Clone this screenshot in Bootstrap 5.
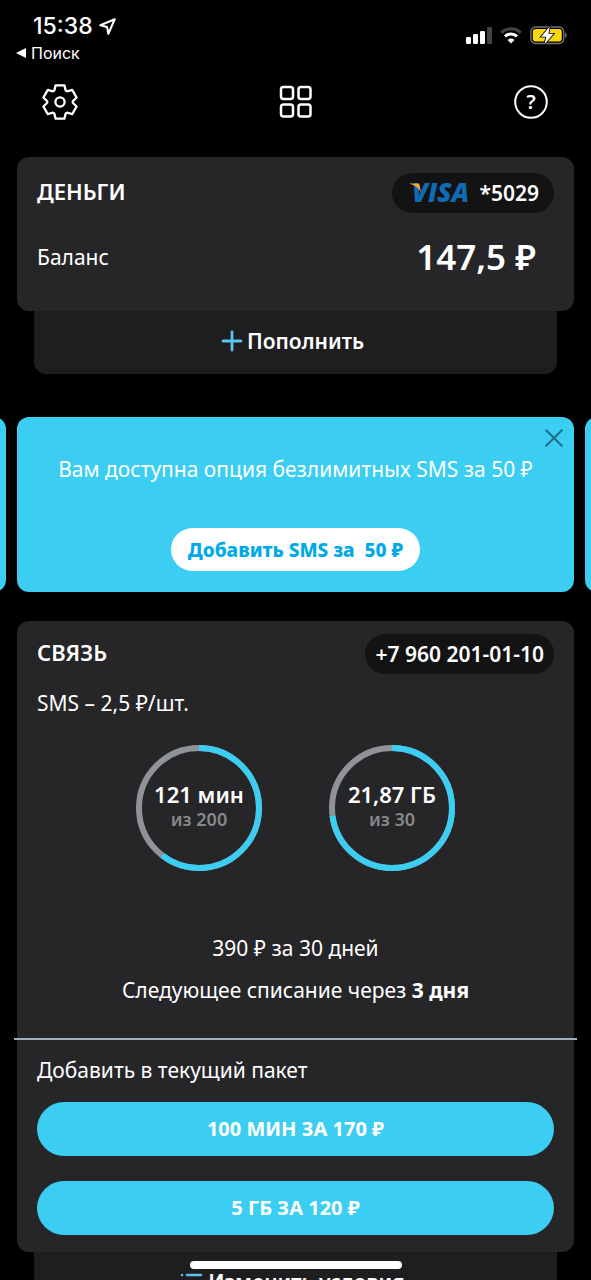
<!DOCTYPE html>
<html lang="ru">
<head>
<meta charset="utf-8">
<meta name="viewport" content="width=device-width, initial-scale=1">
<title>Деньги и связь</title>
<link href="https://cdn.jsdelivr.net/npm/bootstrap@5.3.0/dist/css/bootstrap.min.css" rel="stylesheet">
<style>
  :root { --sky: #3ccdf2; --panel: #262628; --panel-low: #1e1e20; --pill: #131313; }
  body { background: #000; color: #fff; font-family: "Noto Sans", "Open Sans", sans-serif; font-size: 21px; line-height: 30px; }
  svg { display: block; flex: none; }
  .status-bar { font-family: Inter, sans-serif; padding: 12px 24px 0 16px; height: 68px; }
  .clock { font-size: 23px; line-height: 28px; font-weight: 500; padding-left: 17px; gap: 6px; }
  .back-link { font-size: 16px; line-height: 20px; margin-top: 3px; }
  .status-icons { padding-top: 14px; }
  .app-nav { height: 68px; padding: 0 42px; }
  .icon-btn { background: none; border: 0; padding: 0; color: #fff; }
  .gutter { padding: 0 17px; }
  .money { margin-top: 21px; }
  .panel { background: var(--panel); border-radius: 12px; padding: 16px 20px 29px; }
  .panel-tall { padding: 13px 20px 17px; }
  .balance-row { margin-top: 19px; }
  .under-btn { display: flex; align-items: center; justify-content: center; gap: 4px; margin: 0 17px; height: 63px; padding: 0 6px 4px 0; background: var(--panel-low); border: 0; border-radius: 0 0 12px 12px; color: #fff; font-weight: 600; }
  .under-wrap { display: grid; }
  .section-title { font-size: 22px; line-height: 30px; font-weight: 600; margin: 0; padding-bottom: 4px; }
  .pill { background: var(--pill); border: 0; border-radius: 20px; height: 40px; color: #fff; font-weight: 600; padding: 0 10px; }
  .pill-card { padding: 0 15px; }
  .amount { font-size: 35px; line-height: 50px; font-weight: 600; padding-right: 18px; }
  .promo-row { gap: 11px; margin-top: 43px; margin-bottom: 29px; }
  .promo { flex: none; width: calc(100% - 34px); background: var(--sky); border-radius: 12px; padding: 37px 20px 21px; }
  .promo-btn { height: 43px; border: 0; border-radius: 22px; background: #fff; color: #00a9e8; font-size: 19px; font-weight: 800; padding: 0 17px; margin-top: 44px; }
  .promo-close { position: absolute; top: 12px; right: 11px; color: #1f6e86; }
  .sms-rate { margin-top: 14px; }
  .dials { gap: 67px; margin: 27px 0 62px; }
  .dial { display: grid; width: 126px; height: 126px; }
  .dial > * { grid-area: 1 / 1; }
  .dial-text { align-self: center; padding-bottom: 4px; }
  .dial-value { font-size: 22px; line-height: 26px; font-weight: 600; }
  .dial-total { font-size: 18px; line-height: 24px; font-weight: 600; color: #87888c; }
  .next-charge { margin-top: 12px; }
  .divider { margin: 33px -23px 15px; border: 0; border-top: 2px solid #a5adbb; opacity: 1; }
  .packs { margin-top: 17px; row-gap: 25px; }
  .pack-btn { height: 54px; border: 0; border-radius: 27px; background: var(--sky); color: #fff; font-size: 20px; font-weight: 700; }
  .home-bar { position: fixed; bottom: 11px; left: 50%; margin-left: -106px; width: 212px; height: 8px; border-radius: 4px; background: #fff; }
</style>
</head>
<body>
<div class="vh-100 overflow-hidden">
  <header>
    <div class="status-bar d-flex justify-content-between">
      <div>
        <div class="clock d-flex align-items-center">15:38
          <svg width="17" height="17" viewBox="0 0 16 16" fill="none" stroke="#fff" stroke-width="1.9" stroke-linejoin="round"><path d="M14.800 1.200 1.200 6.800l6.400 1.600 1.200 6.400z"/></svg>
        </div>
        <a href="#" class="back-link d-flex align-items-center text-white text-decoration-none gap-1">
          <svg width="11" height="10" viewBox="0 0 11 10" fill="#fff"><path d="M0 5 10 0v10z"/></svg>Поиск</a>
      </div>
      <div class="status-icons d-flex align-items-start gap-2">
        <svg width="26" height="18" viewBox="0 0 26 18" fill="#fff"><rect y="11" width="5" height="7" rx="1.200"/><rect x="7" y="8" width="5" height="10" rx="1.200"/><rect x="14" y="5" width="5" height="13" rx="1.200"/><rect x="21" y="1" width="5" height="17" rx="1.200" fill="#434345"/></svg>
        <svg width="22" height="18" viewBox="0 0 22 18" fill="none" stroke-width="3"><path d="M1.200 6.800a14 14 0 0 1 19.600 0" stroke="#434345"/><path d="M5 10.400a8.600 8.600 0 0 1 12 0" stroke="#fff"/><path d="M11 17.600 7.600 14a4.800 4.800 0 0 1 6.800 0z" fill="#fff"/></svg>
        <svg width="37" height="19" viewBox="0 0 37 19"><rect x=".8" y="1" width="33" height="16.500" rx="5" fill="none" stroke="#77777a" stroke-width="1.300"/><rect x="2.800" y="3" width="29" height="12.500" rx="3" fill="#fbd50e"/><path d="M35.200 6.500c2 .8 2 4.700 0 5.500z" fill="#77777a"/><path d="M19.800.6 11 10.800h5.200l-1.800 7.600 9.200-10.600h-5.200z" fill="#fff" stroke="#000" stroke-width="1.600" paint-order="stroke"/></svg>
      </div>
    </div>
    <nav class="app-nav d-flex justify-content-between align-items-center">
      <button class="icon-btn" aria-label="Настройки">
        <svg width="36" height="36" viewBox="-18 -18 36 36" fill="none" stroke="currentColor" stroke-width="2.300" stroke-linejoin="round"><path d="M-5.700-11.500-4.400-16.600H4.400L5.700-11.500 7.100-10.700 12.200-12.100 16.600-4.500 12.800-.8V.8L16.600 4.500 12.200 12.100 7.100 10.700 5.700 11.500 4.400 16.600H-4.400L-5.700 11.500-7.100 10.700-12.200 12.100-16.600 4.500-12.800.8V-.8L-16.600-4.500-12.200-12.100-7.100-10.700z"/><circle r="4.600"/></svg>
      </button>
      <button class="icon-btn" aria-label="Разделы">
        <svg width="34" height="34" viewBox="0 0 34 34" fill="none" stroke="currentColor" stroke-width="2.500"><rect x="2" y="2" width="12" height="12" rx="2.500"/><rect x="19.500" y="2" width="12" height="12" rx="2.500"/><rect x="2" y="19.500" width="12" height="12" rx="2.500"/><rect x="19.500" y="19.500" width="12" height="12" rx="2.500"/></svg>
      </button>
      <button class="icon-btn" aria-label="Помощь">
        <svg width="36" height="36" viewBox="0 0 36 36"><circle cx="18" cy="18" r="15.800" fill="none" stroke="#fff" stroke-width="2"/><text x="18" y="25" text-anchor="middle" fill="#fff" font-size="20" font-weight="600">?</text></svg>
      </button>
    </nav>
  </header>

  <main>
    <section class="gutter money">
      <div class="panel">
        <div class="d-flex justify-content-between align-items-center">
          <h2 class="section-title">ДЕНЬГИ</h2>
          <button class="pill pill-card d-flex align-items-center gap-2">
            <svg width="64" height="38" viewBox="0 0 64 38"><text x="5" y="28" font-family="Open Sans" font-size="26" font-weight="800" font-style="italic" fill="#0f6cb4">VISA</text><path d="M2 9.500h8c1.600 0 2.400.6 2.700 2l1.500 7.500C12.500 14.500 8 11 2 9.500z" fill="#f3a73a"/></svg>
            *5029
          </button>
        </div>
        <div class="balance-row d-flex justify-content-between align-items-center">
          <span>Баланс</span><span class="amount">147,5 ₽</span>
        </div>
      </div>
      <div class="under-wrap">
        <button class="under-btn">
          <svg width="22" height="22" viewBox="0 0 22 22" stroke="#5bc3ee" stroke-width="2.800" stroke-linecap="round"><path d="M11 2v18M2 11h18"/></svg>
          Пополнить
        </button>
      </div>
    </section>

    <section class="promo-row d-flex justify-content-center">
      <div class="promo"></div>
      <div class="promo position-relative text-center">
        <button class="icon-btn promo-close" aria-label="Закрыть"><svg width="18" height="18" viewBox="0 0 18 18" stroke="currentColor" stroke-width="2" stroke-linecap="round"><path d="M1.200 1.200 16.800 16.800M16.800 1.200 1.200 16.800"/></svg></button>
        <div>Вам доступна опция безлимитных SMS за 50 ₽</div>
        <button class="promo-btn">Добавить SMS за&nbsp; 50 ₽</button>
      </div>
      <div class="promo"></div>
    </section>

    <section class="gutter">
      <div class="panel panel-tall">
        <div class="d-flex justify-content-between align-items-center">
          <h2 class="section-title">СВЯЗЬ</h2>
          <button class="pill">+7 960 201-01-10</button>
        </div>
        <div class="sms-rate">SMS – 2,5 ₽/шт.</div>
        <div class="dials d-flex justify-content-center">
          <div class="dial text-center">
            <svg width="126" height="126" viewBox="0 0 126 126" fill="none" stroke-width="6"><circle cx="63" cy="63" r="60" stroke="#8f9398"/><circle cx="63" cy="63" r="60" stroke="#3ccdf2" pathLength="100" stroke-dasharray="60.5 100" transform="rotate(-90 63 63)"/></svg>
            <div class="dial-text"><div class="dial-value">121 мин</div><div class="dial-total">из 200</div></div>
          </div>
          <div class="dial text-center">
            <svg width="126" height="126" viewBox="0 0 126 126" fill="none" stroke-width="6"><circle cx="63" cy="63" r="60" stroke="#8f9398"/><circle cx="63" cy="63" r="60" stroke="#3ccdf2" pathLength="100" stroke-dasharray="72.9 100" transform="rotate(-90 63 63)"/></svg>
            <div class="dial-text"><div class="dial-value">21,87 ГБ</div><div class="dial-total">из 30</div></div>
          </div>
        </div>
        <div class="text-center">390 ₽ за 30 дней</div>
        <div class="text-center next-charge">Следующее списание через <b>3 дня</b></div>
        <hr class="divider">
        <div>Добавить в текущий пакет</div>
        <div class="d-grid packs">
          <button class="pack-btn">100 МИН ЗА 170 ₽</button>
          <button class="pack-btn">5 ГБ ЗА 120 ₽</button>
        </div>
      </div>
      <div class="under-wrap">
        <button class="under-btn">
          <svg width="24" height="18" viewBox="0 0 24 18" stroke="#5bc3ee" stroke-width="2.400" stroke-linecap="round"><path d="M2 2h.1M7 2h14M2 9h.1M7 9h14M2 16h.1M7 16h14"/></svg>
          Изменить условия
        </button>
      </div>
    </section>
  </main>
  <div class="home-bar"></div>
</div>
<script src="https://cdn.jsdelivr.net/npm/bootstrap@5.3.0/dist/js/bootstrap.bundle.min.js"></script>
</body>
</html>
